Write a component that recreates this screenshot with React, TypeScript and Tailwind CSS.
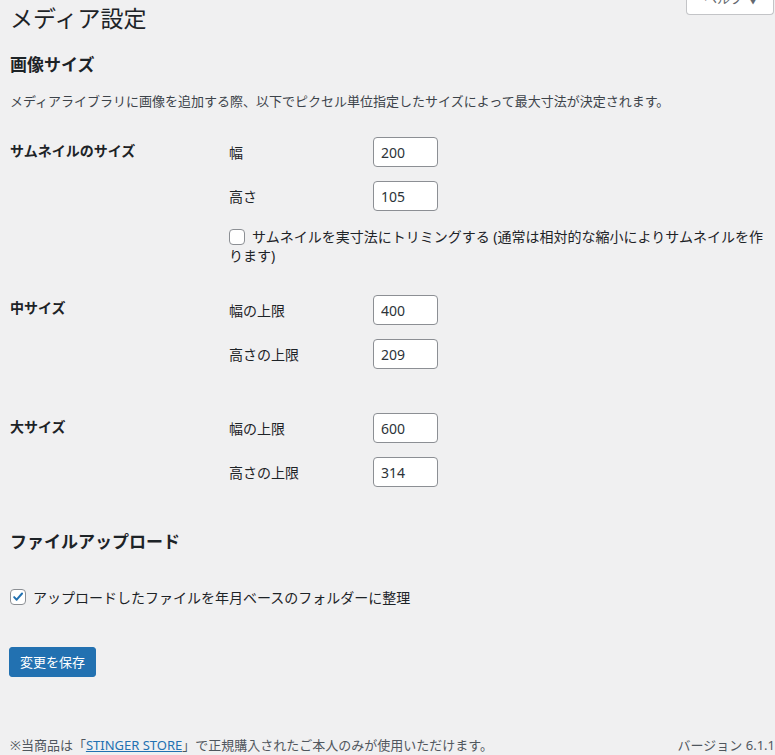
const Field = ({ label, value, className = "" }: { label: string; value: string; className?: string }) => (
  <div className={`flex h-[30px] items-center ${className}`}>
    <span className="w-[144px] shrink-0 text-[14px] text-[#1d2327]">{label}</span>
    <input
      readOnly
      defaultValue={value}
      className="h-[30px] w-[65px] rounded-[4px] border border-[#8c8f94] bg-white px-[7px] text-[14px] text-[#2c3338] outline-none"
    />
  </div>
);

const Checkbox = ({ checked = false }: { checked?: boolean }) => (
  <span className="relative top-[-1px] mr-[7px] inline-flex h-4 w-4 shrink-0 items-center justify-center rounded-[4px] border border-[#8c8f94] bg-white align-middle">
    {checked && (
      <svg viewBox="0 0 20 20" className="h-[18px] w-[18px]">
        <path d="M4.5 10.2l3.6 3.7L15.8 5" fill="none" stroke="#2271b1" strokeWidth="2.8" strokeLinecap="round" strokeLinejoin="round" />
      </svg>
    )}
  </span>
);

export default function App() {
  return (
    <div className="relative h-[755px] w-[775px] overflow-hidden bg-[#f0f0f1] font-['Noto_Sans','Noto_Sans_CJK_JP',sans-serif] text-[#1d2327]">
      {/* help tab, cut off at the top */}
      <div className="absolute right-[1px] top-0 h-[15px] w-[88px] overflow-hidden rounded-b-[4px] border border-t-0 border-[#c3c4c7] bg-white">
        <div className="-mt-[12px] pl-[17px] text-[13px] leading-[20px] text-[#646970]">ヘルプ ▼</div>
      </div>

      <div className="pl-[10px]">
        <h1 className="pt-[3px] text-[23px] font-normal leading-[30px] text-[#1d2327]">メディア設定</h1>

        <h2 className="mt-[21px] text-[17px] font-semibold leading-[22px]">画像サイズ</h2>
        <p className="mt-[15px] text-[13px] leading-[20px] text-[#3c434a]">
          メディアライブラリに画像を追加する際、以下でピクセル単位指定したサイズによって最大寸法が決定されます。
        </p>

        <div className="mt-[26px] flex">
          <div className="w-[219px] shrink-0 pt-[4px] text-[14px] font-semibold leading-[20px]">サムネイルのサイズ</div>
          <div className="w-[545px]">
            <Field label="幅" value="200" />
            <Field label="高さ" value="105" className="mt-[14px]" />
            <label className="mt-[16px] block text-[14px] leading-[19px] text-[#1d2327]">
              <Checkbox />
              サムネイルを実寸法にトリミングする (通常は相対的な縮小によりサムネイルを作ります)
            </label>
          </div>
        </div>

        <div className="mt-[30px] flex">
          <div className="w-[219px] shrink-0 pt-[3px] text-[14px] font-semibold leading-[20px]">中サイズ</div>
          <div>
            <Field label="幅の上限" value="400" />
            <Field label="高さの上限" value="209" className="mt-[14px]" />
          </div>
        </div>

        <div className="mt-[44px] flex">
          <div className="w-[219px] shrink-0 pt-[4px] text-[14px] font-semibold leading-[20px]">大サイズ</div>
          <div>
            <Field label="幅の上限" value="600" />
            <Field label="高さの上限" value="314" className="mt-[14px]" />
          </div>
        </div>

        <h2 className="mt-[44px] text-[17px] font-semibold leading-[22px]">ファイルアップロード</h2>

        <label className="mt-[35px] flex items-center text-[14px] leading-[20px] text-[#1d2327]">
          <Checkbox checked />
          アップロードしたファイルを年月ベースのフォルダーに整理
        </label>

        <button className="ml-[-1px] mt-[39px] h-[30px] rounded-[3px] border border-[#2271b1] bg-[#2271b1] px-[10px] text-[13px] leading-[28px] text-white">
          変更を保存
        </button>
      </div>

      <div className="mt-[58px] flex justify-between pl-[10px] text-[13px] leading-[20px] text-[#50575e]">
        <span>
          ※当商品は「<a className="text-[#2271b1] underline">STINGER STORE</a>」で正規購入されたご本人のみが使用いただけます。
        </span>
        <span>バージョン 6.1.1</span>
      </div>
    </div>
  );
}
